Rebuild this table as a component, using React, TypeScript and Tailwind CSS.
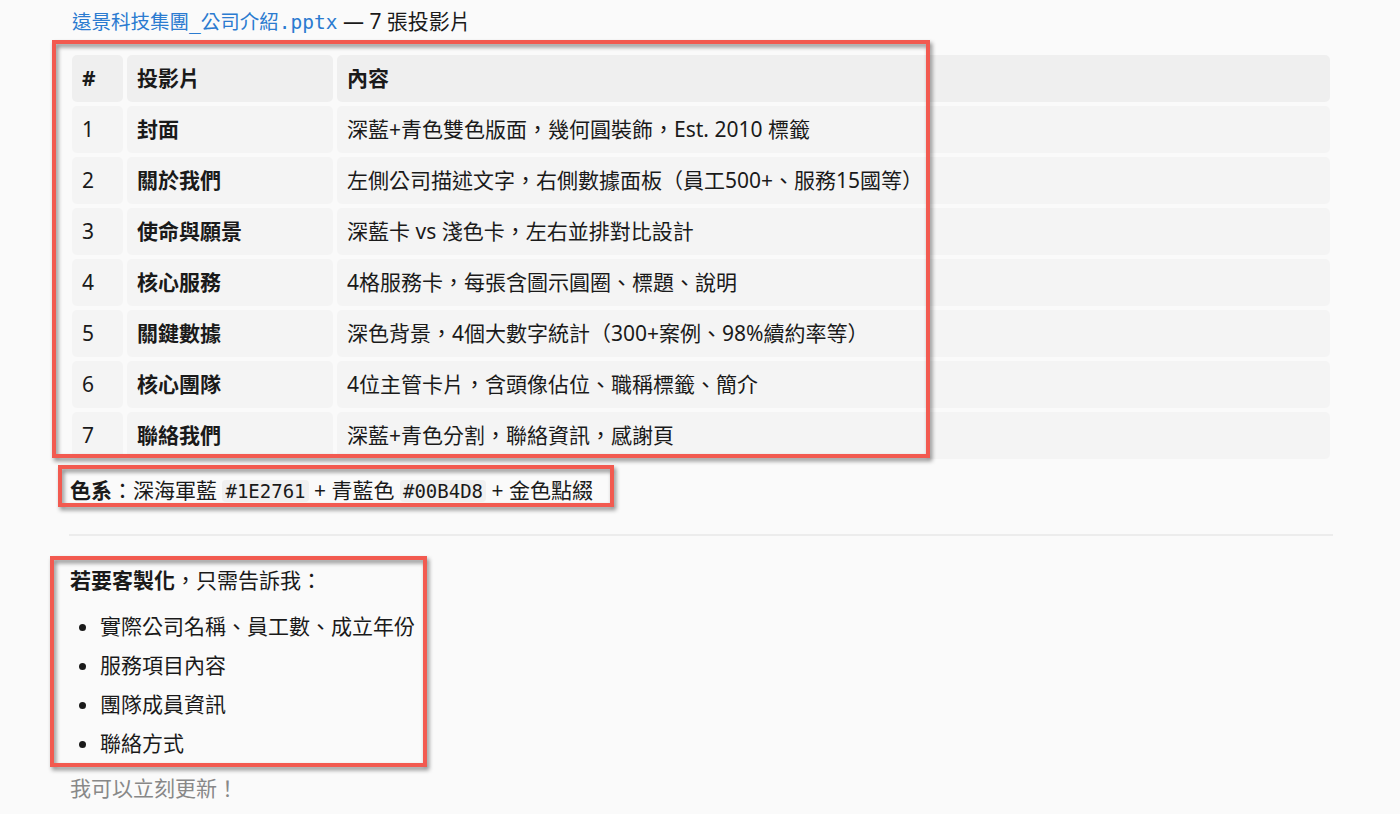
const rows = [
  { n: '1', name: '封面', desc: '深藍+青色雙色版面，幾何圓裝飾，Est. 2010 標籤' },
  { n: '2', name: '關於我們', desc: '左側公司描述文字，右側數據面板（員工500+、服務15國等）' },
  { n: '3', name: '使命與願景', desc: '深藍卡 vs 淺色卡，左右並排對比設計' },
  { n: '4', name: '核心服務', desc: '4格服務卡，每張含圖示圓圈、標題、說明' },
  { n: '5', name: '關鍵數據', desc: '深色背景，4個大數字統計（300+案例、98%續約率等）' },
  { n: '6', name: '核心團隊', desc: '4位主管卡片，含頭像佔位、職稱標籤、簡介' },
  { n: '7', name: '聯絡我們', desc: '深藍+青色分割，聯絡資訊，感謝頁' },
]

const items = ['實際公司名稱、員工數、成立年份', '服務項目內容', '團隊成員資訊', '聯絡方式']

const mono = "font-['DejaVu_Sans_Mono','Liberation_Mono','Noto_Sans_CJK_TC',monospace]"

export default function App() {
  return (
    <div className="relative min-h-[814px] bg-[#fafafa] text-[#1a1a1a] font-['Noto_Sans','Noto_Sans_CJK_TC',sans-serif] text-[21px] leading-[29px]">
      <div className="pl-[68px] pr-[66px] pt-[7px]">
        {/* file line */}
        <p className="pl-[4px]">
          <code className={`${mono} text-[19.5px] text-[#2b7bd0]`}>遠景科技集團_公司介紹.pptx</code>{' '}
          — 7 張投影片
        </p>

        {/* slides table */}
        <table className="mt-[14px] w-full border-separate border-spacing-[4px]">
          <thead>
            <tr>
              <th className="w-[51px] rounded-[5px] bg-[#efefef] px-[10px] py-[9px] text-left font-bold">#</th>
              <th className="w-[206px] rounded-[5px] bg-[#efefef] px-[10px] py-[9px] text-left font-bold">投影片</th>
              <th className="rounded-[5px] bg-[#efefef] px-[10px] py-[9px] text-left font-bold">內容</th>
            </tr>
          </thead>
          <tbody>
            {rows.map((r) => (
              <tr key={r.n}>
                <td className="rounded-[5px] bg-[#f4f4f4] px-[10px] py-[9px]">{r.n}</td>
                <td className="rounded-[5px] bg-[#f4f4f4] px-[10px] py-[9px] font-bold">{r.name}</td>
                <td className="rounded-[5px] bg-[#f4f4f4] px-[10px] py-[9px]">{r.desc}</td>
              </tr>
            ))}
          </tbody>
        </table>

        {/* colour scheme */}
        <p className="mt-[13px] pl-[2px]">
          <strong>色系</strong>：深海軍藍{' '}
          <code className={`${mono} rounded-[4px] bg-[#f0f0f0] px-[3px] text-[19px]`}>#1E2761</code> + 青藍色{' '}
          <code className={`${mono} rounded-[4px] bg-[#f0f0f0] px-[3px] text-[19px]`}>#00B4D8</code> + 金色點綴
        </p>

        <hr className="mt-[28px] mb-[30px] border-t-2 border-[#ececec] mx-[1px]" />

        {/* customisation */}
        <p className="pl-[2px]">
          <strong>若要客製化</strong>，只需告訴我：
        </p>
        <ul className="mt-[17px] list-disc pl-[32px] space-y-[10px]">
          {items.map((t) => (
            <li key={t}>{t}</li>
          ))}
        </ul>
        <p className="mt-[16px] pl-[2px] text-[#888888]">我可以立刻更新！</p>
      </div>

      {/* annotation boxes */}
      <div className="pointer-events-none absolute left-[52px] top-[40px] h-[418px] w-[878px] border-4 border-[#f25a50] [filter:drop-shadow(2px_3px_2px_rgba(0,0,0,0.45))]" />
      <div className="pointer-events-none absolute left-[58px] top-[465px] h-[42px] w-[556px] border-4 border-[#f25a50] [filter:drop-shadow(2px_3px_2px_rgba(0,0,0,0.45))]" />
      <div className="pointer-events-none absolute left-[50px] top-[556px] h-[211px] w-[377px] border-4 border-[#f25a50] [filter:drop-shadow(2px_3px_2px_rgba(0,0,0,0.45))]" />
    </div>
  )
}
